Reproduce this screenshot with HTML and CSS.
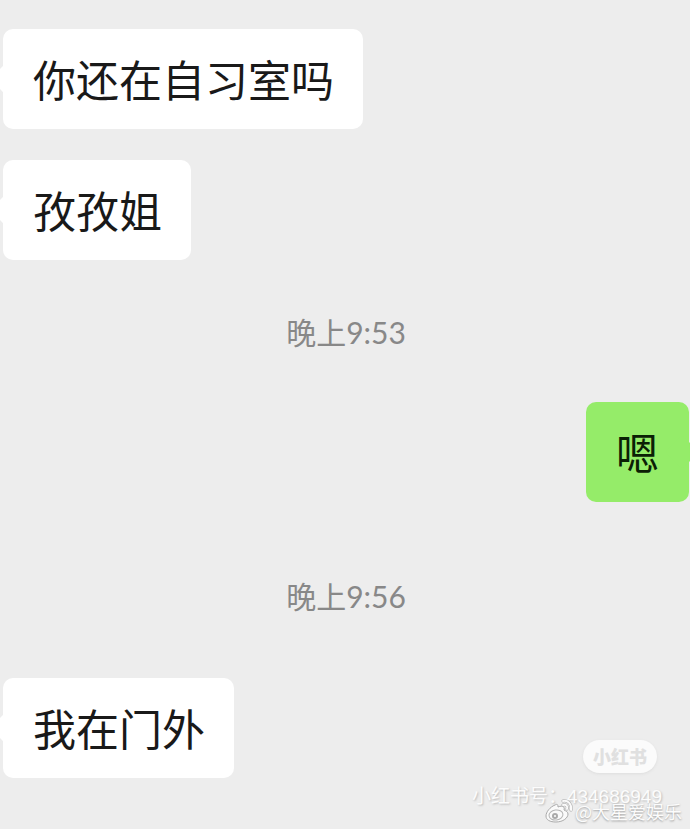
FILE: index.html
```
<!DOCTYPE html>
<html lang="zh-CN">
  <head>
    <meta charset="utf-8">
    <title>聊天</title>
    <link rel="stylesheet" href="styles.css">
  </head>

  <body>
    <main class="chat">
      <p class="bubble">你还在自习室吗</p>
      <p class="bubble">孜孜姐</p>
      <time class="time">晚上9:53</time>
      <p class="bubble mine">嗯</p>
      <time class="time">晚上9:56</time>
      <p class="bubble">我在门外</p>
    </main>

    <div class="marks">
      <span class="badge">小红书</span>
      <span class="account">小红书号：434686949</span>
      <span class="author">
        <svg class="logo" viewBox="0 0 28 24" aria-hidden="true">
          <path class="body" d="M10 6C5 8 1 13 1 17c0 4 4 6 10 6 7 0 12-4 12-8 0-2-2-3-4-4 1-3-1-5-6-3 0-3-1-3-3-2z" />
          <ellipse class="ring" cx="11" cy="16" rx="7" ry="5" transform="rotate(-8 11 16)" />
          <circle class="eye" cx="10" cy="17" r="3" />
          <circle class="shine" cx="10" cy="17" r="1" />
          <path class="wave-edge" d="M18 2c5-1 9 3 8 9M18 6c3-1 5 1 4 4" />
          <path class="wave" d="M18 2c5-1 9 3 8 9M18 6c3-1 5 1 4 4" />
        </svg>
        @大星爱娱乐
      </span>
    </div>
  </body>
</html>
```
FILE: styles.css
```
body {
  position: relative;
  min-height: 100vh;
  margin: 0;
  overflow: hidden;
  background-color: #ededed;
  font-family: "Noto Sans CJK SC", sans-serif;
}

.chat {
  display: flex;
  flex-direction: column;
  align-items: flex-start;
  padding: 29px 1px 51px 3px;
}

.bubble {
  position: relative;
  margin: 0 0 31px;
  padding: 19px 29px 21px 30px;
  border-radius: 10px;
  background-color: white;
  color: #191919;
  font-size: 43px;
  line-height: 60px;
}

/* the little tail beside each bubble */
.bubble::before {
  content: "";
  position: absolute;
  top: 38px;
  left: -8px;
  width: 24px;
  height: 24px;
  border-radius: 4px;
  background-color: inherit;
  transform: rotate(45deg);
}

.bubble:last-child {
  margin-bottom: 0;
}

.mine {
  align-self: flex-end;
  padding-right: 30px;
  background-color: #95ec69;
  color: #0b2005;
}

.mine::before {
  left: auto;
  right: -5px;
}

.time {
  align-self: center;
  margin: 19px 0 48px;
  color: #888;
  font-family: Lato, "Noto Sans CJK SC", sans-serif;
  font-size: 30px;
  line-height: 44px;
}

.mine + .time {
  margin: 41px 0 60px;
}

.marks {
  position: absolute;
  right: 8px;
  bottom: 5px;
  display: flex;
  flex-direction: column;
  align-items: flex-end;
  color: #fcfcfc;
}

.badge {
  margin: 0 25px 12px 0;
  padding: 0 10px;
  border-radius: 17px;
  background-color: #fbfbfb;
  box-shadow: 0 1px 3px #ddd;
  color: #e0e0e0;
  font-size: 18px;
  font-weight: 900;
  line-height: 33px;
}

.account {
  margin-right: 20px;
  font-family: "Liberation Sans", "Noto Sans CJK SC", sans-serif;
  font-size: 19px;
  line-height: 24px;
  text-shadow: 1px 1px 2px #bbb;
}

.author {
  display: flex;
  align-items: center;
  gap: 2px;
  margin-top: -11px;
  font-size: 18px;
  line-height: 26px;
  text-shadow: 0 1px 2px #999;
}

.logo {
  width: 28px;
  height: 24px;
  fill: none;
}

.body {
  fill: #fafafa;
  stroke: #aaa;
}

.ring {
  fill: #fafafa;
  stroke: #b5b5b5;
}

.eye {
  fill: #aaa;
}

.shine {
  fill: white;
}

.wave-edge {
  stroke: #aaa;
  stroke-width: 3;
  stroke-linecap: round;
}

.wave {
  stroke: #fafafa;
  stroke-width: 2;
  stroke-linecap: round;
}
```
